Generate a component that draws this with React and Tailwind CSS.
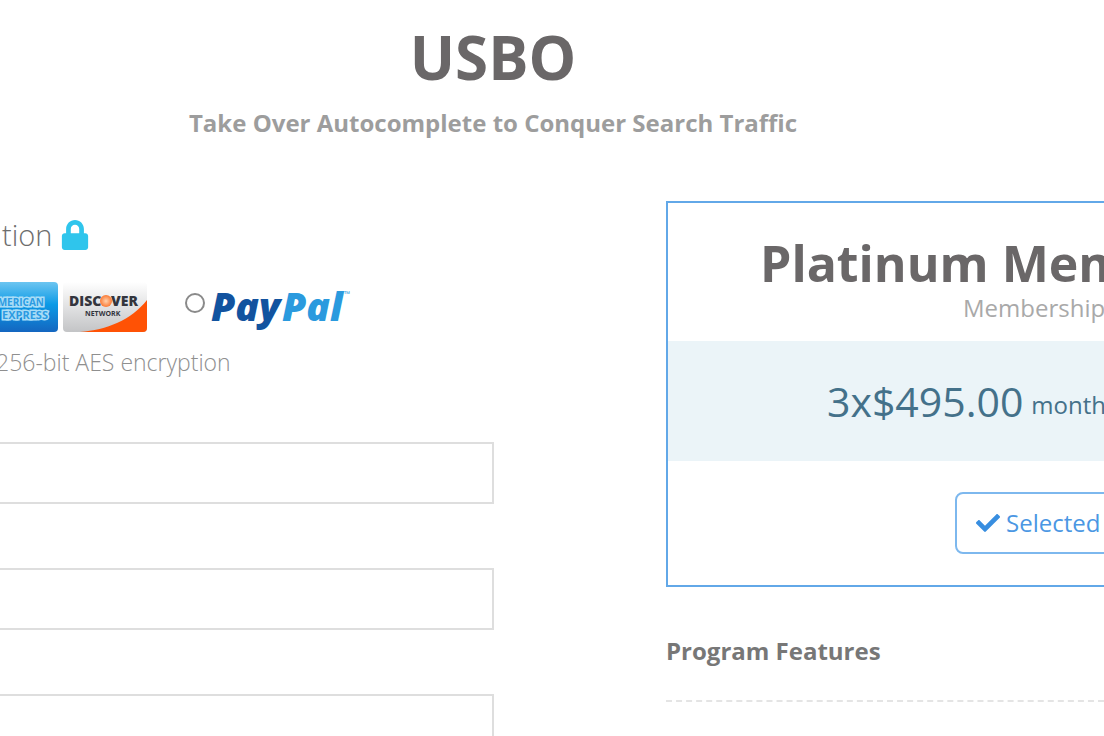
import React from "react";
import { FaLock, FaCheck } from "react-icons/fa";

function AmexCard() {
  return (
    <svg className="h-[52px] w-[59px] shrink-0" viewBox="0 0 59 52" role="img" aria-label="American Express">
      <defs>
        <linearGradient id="amex" x1="0" y1="0" x2="0" y2="1">
          <stop offset="0" stopColor="#6cc5f1" />
          <stop offset="0.45" stopColor="#0b9ae6" />
          <stop offset="1" stopColor="#1466c0" />
        </linearGradient>
      </defs>
      <rect x="-26" y="1" width="84" height="50" rx="4" fill="url(#amex)" />
      <g fontFamily="Open Sans, sans-serif" fontWeight="700" fill="#2c9be2" stroke="#a9ddf7" strokeWidth="3" paintOrder="stroke">
        <text x="44" y="25" fontSize="10" textAnchor="end">MERICAN</text>
        <text x="48" y="38" fontSize="11" textAnchor="end">EXPRESS</text>
      </g>
    </svg>
  );
}

function DiscoverCard() {
  return (
    <svg className="h-[52px] w-[84px] shrink-0" viewBox="0 0 84 52" role="img" aria-label="Discover Network">
      <defs>
        <linearGradient id="disc" x1="0" y1="0" x2="0" y2="1">
          <stop offset="0" stopColor="#ffffff" />
          <stop offset="1" stopColor="#c3c4c6" />
        </linearGradient>
        <radialGradient id="orb">
          <stop offset="0" stopColor="#ffd2ae" />
          <stop offset="1" stopColor="#fb7a35" />
        </radialGradient>
      </defs>
      <rect x="0" y="1" width="84" height="50" rx="4" fill="url(#disc)" />
      <path d="M84 19V47Q84 51 80 51H17C44 49 68 39 84 19Z" fill="#ff5205" />
      <g fontFamily="Open Sans, sans-serif" fontWeight="700" fill="#33353d">
        <text x="6" y="25" fontSize="14" fontWeight="800">DISC</text>
        <text x="48" y="25" fontSize="14" fontWeight="800">VER</text>
        <text x="22" y="35" fontSize="7">NETWORK</text>
      </g>
      <circle cx="43" cy="20" r="6" fill="url(#orb)" />
    </svg>
  );
}

function PayPalLogo() {
  return (
    <svg className="h-[50px] w-[144px] shrink-0 overflow-visible" viewBox="0 0 144 50" role="img" aria-label="PayPal">
      <g fontFamily="Open Sans, sans-serif" fontWeight="800" fontStyle="italic" fontSize="39">
        <text x="0" y="40" fill="#12539f">Pay</text>
        <text x="71" y="40" fill="#2a9ade">Pal</text>
      </g>
      <text x="133" y="16" fontFamily="Open Sans, sans-serif" fontSize="8" fill="#2a9ade">™</text>
    </svg>
  );
}

function Field({ label }) {
  return (
    <input
      type="text"
      aria-label={label}
      className="block h-[62px] w-full border-2 border-l-0 border-[#dedede] bg-white px-4 text-2xl outline-none"
    />
  );
}

export default function App() {
  return (
    <div className="h-screen overflow-hidden bg-white font-['Open_Sans',sans-serif] text-[#6a6768]">
      <header className="pr-[118px] pt-4 text-center">
        <h1 className="text-[60px] leading-[82px] font-bold">USBO</h1>
        <p className="mt-2 text-2xl leading-[34px] font-bold text-[#9d9d9d]">
          Take Over Autocomplete to Conquer Search Traffic
        </p>
      </header>

      <main className="mt-[61px] flex">
        <form className="w-[494px] shrink-0">
          <h2 className="mt-3 flex items-center gap-2 pl-0.5 text-[29px] leading-[44px] font-light text-[#6d6d6d]">
            tion
            <FaLock className="size-[30px] text-[#2fc5ec]" />
          </h2>

          <div className="mt-6 flex items-start">
            <AmexCard />
            <div className="ml-1">
              <DiscoverCard />
            </div>
            <label className="ml-[38px] flex items-start gap-1.5">
              <input
                type="radio"
                name="payment"
                aria-label="PayPal"
                className="mt-3 size-5 appearance-none rounded-full border-2 border-[#8a8a8a] bg-white"
              />
              <PayPalLogo />
            </label>
          </div>
          <p className="-ml-1 mt-3 text-[23px] leading-[34px] font-light whitespace-nowrap text-[#8f8f8f]">
            256-bit AES encryption
          </p>

          <div className="mt-[63px] flex flex-col gap-16">
            <Field label="First field" />
            <Field label="Second field" />
            <Field label="Third field" />
          </div>
        </form>

        <aside className="ml-[172px] min-w-0 flex-1 whitespace-nowrap">
          <section className="border-2 border-r-0 border-[#62a8e8]">
            <div className="h-[138px] pt-[30px]">
              <h2 className="pl-[92px] text-[50px] leading-[60px] font-bold">Platinum Mem</h2>
              <p className="pl-[295px] text-2xl leading-[30px] text-[#a9a9a9]">Membership</p>
            </div>
            <p className="flex h-[120px] items-center gap-2 bg-[#ebf4f8] pl-[159px] text-[#44718a]">
              <span className="text-[41px] leading-[60px]">3x$495.00</span>
              <span className="pt-2 text-2xl">month</span>
            </p>
            <div className="flex h-[124px] items-center pl-[287px]">
              <button
                type="button"
                className="flex h-[62px] w-[190px] shrink-0 items-center gap-1.5 rounded-lg border-2 border-[#7db8ee] bg-white pl-[19px] text-2xl text-[#4b97e3]"
              >
                <FaCheck className="size-6 text-[#388ee0]" />
                Selected
              </button>
            </div>
          </section>

          <h3 className="mt-[47px] text-2xl leading-[34px] font-bold text-[#777777]">Program Features</h3>
          <div className="mt-8 border-t-2 border-dashed border-[#e4e4e4]" />
        </aside>
      </main>
    </div>
  );
}
